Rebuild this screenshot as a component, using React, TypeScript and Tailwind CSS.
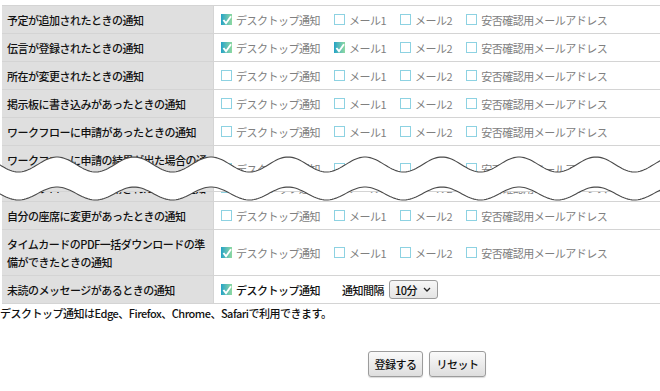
import React from "react";

const FONT = '"Noto Sans CJK JP", "Noto Sans", sans-serif';

type Row = { label: React.ReactNode; checks: boolean[]; h?: number };

const TOP: Row[] = [
  { label: "予定が追加されたときの通知", checks: [true, false, false, false] },
  { label: "伝言が登録されたときの通知", checks: [true, true, false, false] },
  { label: "所在が変更されたときの通知", checks: [false, false, false, false] },
  { label: "掲示板に書き込みがあったときの通知", checks: [false, false, false, false] },
  { label: "ワークフローに申請があったときの通知", checks: [false, false, false, false] },
];

const NAMES = ["デスクトップ通知", "メール1", "メール2", "安否確認用メールアドレス"];

function Box({ checked }: { checked: boolean }) {
  if (checked) {
    return (
      <span className="flex h-[11px] w-[11px] shrink-0 items-center justify-center bg-gradient-to-r from-[#1fa3c6] to-[#8ed9a0]">
        <svg width="10" height="10" viewBox="0 0 10 10">
          <path d="M1.4 5 L4 8.2 L9 1.3" fill="none" stroke="#fff" strokeWidth="1.9" />
        </svg>
      </span>
    );
  }
  return <span className="block h-[11px] w-[11px] shrink-0 border border-[#8dd2e2] bg-white" />;
}

function Item({ checked, label, dark }: { checked: boolean; label: string; dark?: boolean }) {
  return (
    <span className="flex items-center gap-[4px]">
      <Box checked={checked} />
      <span className={dark ? "font-medium text-[#111]" : "text-[#808080]"}>{label}</span>
    </span>
  );
}

function TableRow({ row, h = 28 }: { row: Row; h?: number }) {
  return (
    <div className="flex border-b border-[#d4d4d4]" style={{ height: h }}>
      <div className="flex w-[212px] shrink-0 items-center border-r border-[#d4d4d4] bg-[#dfdfdf] pl-[5px] font-medium leading-[18px] text-[#111]">
        <span>{row.label}</span>
      </div>
      <div className="flex flex-1 items-center gap-[14px] pl-[7px]">
        {row.checks.map((c, i) => (
          <Item key={i} checked={c} label={NAMES[i]} />
        ))}
      </div>
    </div>
  );
}

function wavePts(c: number, a: number) {
  const pts: [number, number][] = [];
  for (let x = -2; x <= 662; x += 2) {
    pts.push([x, c - a * Math.cos((2 * Math.PI * (x - 57)) / 77)]);
  }
  return pts;
}

function Wave() {
  const up = wavePts(164.5, 7.5);
  const lo = wavePts(193.5, 6.5);
  const upD = "M" + up.map(([x, y]) => `${x} ${y.toFixed(2)}`).join(" L");
  const loD = "M" + lo.map(([x, y]) => `${x} ${y.toFixed(2)}`).join(" L");
  const fillD =
    upD +
    " L" +
    [...lo].reverse().map(([x, y]) => `${x} ${y.toFixed(2)}`).join(" L") +
    " Z";
  return (
    <svg
      className="absolute left-0 top-[150px]"
      width="660"
      height="56"
      viewBox="0 150 660 56"
    >
      <path d={fillD} fill="#fff" />
      <path d={upD} fill="none" stroke="#4a4a4a" strokeWidth="1.1" />
      <path d={loD} fill="none" stroke="#4a4a4a" strokeWidth="1.1" />
    </svg>
  );
}

export default function App() {
  return (
    <div
      className="relative h-[391px] w-[660px] overflow-hidden bg-white text-[11px] leading-[18px] tracking-[-0.5px]"
      style={{ fontFamily: FONT }}
    >
      <div className="ml-[2px] mt-[5px] border-t border-[#d4d4d4]">
        {TOP.map((r, i) => (
          <TableRow key={i} row={r} />
        ))}
        <TableRow
          h={46}
          row={{
            label: (
              <>
                ワークフローに申請の結果が出た場合の通
                <br />知
              </>
            ),
            checks: [false, false, false, false],
          }}
        />
        <div className="flex h-[10px] flex-col justify-end overflow-hidden">
          <div className="shrink-0">
            <TableRow
              row={{
                label: "ワークフローで代理申請されたときの通知",
                checks: [false, false, false, false],
              }}
            />
          </div>
        </div>
        <TableRow
          row={{ label: "自分の座席に変更があったときの通知", checks: [false, false, false, false] }}
        />
        <TableRow
          h={46}
          row={{
            label: (
              <>
                タイムカードのPDF一括ダウンロードの準
                <br />
                備ができたときの通知
              </>
            ),
            checks: [true, false, false, false],
          }}
        />
        <div className="flex h-[28px] border-b border-[#d4d4d4]">
          <div className="flex w-[212px] shrink-0 items-center border-r border-[#d4d4d4] bg-[#dfdfdf] pl-[5px] font-medium text-[#111]">
            未読のメッセージがあるときの通知
          </div>
          <div className="flex flex-1 items-center pl-[7px]">
            <Item checked label="デスクトップ通知" dark />
            <span className="ml-[22px] font-medium text-[#111]">通知間隔</span>
            <div className="ml-[5px] flex h-[19px] w-[49px] items-center justify-between rounded-[3px] border border-[#9a9a9a] bg-gradient-to-b from-[#f7f7f7] to-[#e4e4e4] pl-[5px] pr-[6px] font-medium text-[#111]">
              <span>10分</span>
              <svg width="8" height="5" viewBox="0 0 8 5">
                <path d="M1 1 L4 4 L7 1" fill="none" stroke="#222" strokeWidth="1.3" />
              </svg>
            </div>
          </div>
        </div>
      </div>
      <p className="font-medium text-[#111]">デスクトップ通知はEdge、Firefox、Chrome、Safariで利用できます。</p>
      <div className="mt-[29px] flex gap-[6px] pl-[368px]">
        <button className="h-[26px] w-[55px] rounded-[3px] border border-[#9c9c9c] bg-gradient-to-b from-[#fafafa] to-[#dedede] text-[11px] font-medium tracking-[-0.5px] text-[#111] shadow-[0_1px_1px_rgba(0,0,0,0.15)]">
          登録する
        </button>
        <button className="h-[26px] w-[57px] rounded-[3px] border border-[#9c9c9c] bg-gradient-to-b from-[#fafafa] to-[#dedede] text-[11px] font-medium tracking-[-0.5px] text-[#111] shadow-[0_1px_1px_rgba(0,0,0,0.15)]">
          リセット
        </button>
      </div>
      <Wave />
    </div>
  );
}
